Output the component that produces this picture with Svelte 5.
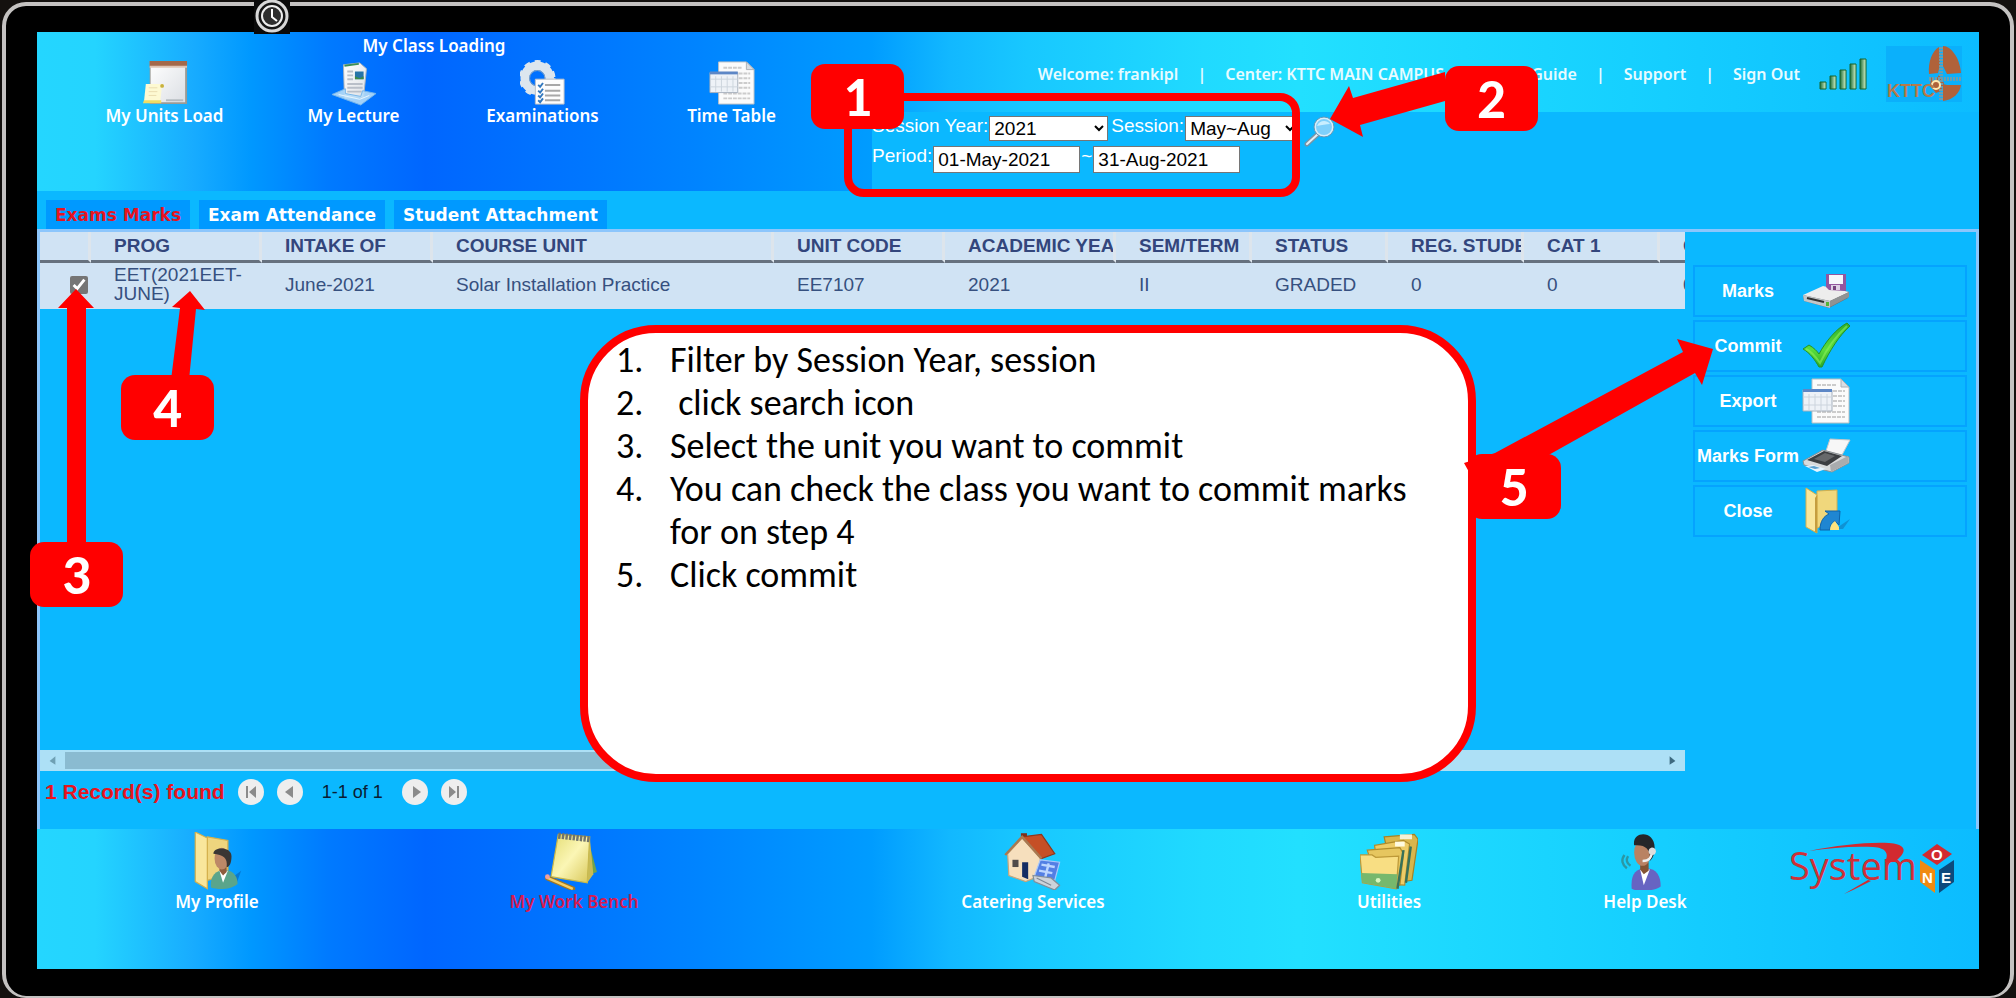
<script>
  const modules = [
    { label: 'My Units Load', icon: 'clipboard' },
    { label: 'My Lecture', icon: 'lecture' },
    { label: 'Examinations', icon: 'exams' },
    { label: 'Time Table', icon: 'sheet' }
  ];
  const tabs = ['Exams Marks', 'Exam Attendance', 'Student Attachment'];
  const columns = ['PROG', 'INTAKE OF', 'COURSE UNIT', 'UNIT CODE', 'ACADEMIC YEAR', 'SEM/TERM', 'STATUS', 'REG. STUDENTS', 'CAT 1', 'CAT 2'];
  const record = ['EET(2021EET-JUNE)', 'June-2021', 'Solar Installation Practice', 'EE7107', '2021', 'II', 'GRADED', '0', '0', '0'];
  const actions = [
    { label: 'Marks', icon: 'drive' },
    { label: 'Commit', icon: 'tick' },
    { label: 'Export', icon: 'sheet' },
    { label: 'Marks Form', icon: 'printer' },
    { label: 'Close', icon: 'folderArrow' }
  ];
  const dock = [
    { label: 'My Profile', icon: 'profile' },
    { label: 'My Work Bench', icon: 'notepad', active: true },
    { label: 'Catering Services', icon: 'house' },
    { label: 'Utilities', icon: 'folders' },
    { label: 'Help Desk', icon: 'agent' }
  ];
  let activeTab = $state('Exams Marks');
  let year = $state('2021');
  let session = $state('May~Aug');
  let from = $state('01-May-2021');
  let to = $state('31-Aug-2021');
  let checked = $state(true);
</script>

{#snippet icon(name)}
  <svg class="icon" viewBox="0 0 48 48" aria-hidden="true">
    {#if name === 'clipboard'}
      <path d="M8 1h39v45H8z" fill="#9a9a94" /><path d="M9 2h36v42H9z" fill="url(#paper)" />
      <path d="M8 1h39v6H8z" fill="#a4694a" /><path d="M8 6h39v2H8z" fill="#dec4b4" />
      <path d="M25 42h18" stroke="#b5bbc0" stroke-width="2" />
      <path d="M4 25h17l-2 19H2z" fill="#fdf9d2" /><path d="M2 42h18v3H1z" fill="#f1dd63" />
      <path d="M7 29h9M7 33h9M7 37h8" stroke="#e9ddb0" /><circle cx="21" cy="27" r="2" fill="#c8b13c" />
    {:else if name === 'lecture'}
      <path d="M13 5l17-2 7 6-3 30-20 1z" fill="url(#paper)" stroke="#a8b2bd" />
      <path d="M14 6l15-2" stroke="#3a8f57" stroke-width="2" />
      <path d="M25 12h9v8h-9z" fill="#2674a8" /><path d="M25 17l5 2 4-2v3h-9z" fill="#3c8b4a" />
      <path d="M17 12h6M17 16h6M17 20h6M17 25h16M17 29h16M17 33h15" stroke="#b9bfc8" stroke-width="2" />
      <path d="M1 36l14-6v5l16 3 2-6 14 3-16 12z" fill="#b5dcf7" fill-opacity=".9" stroke="#74b5ea" />
      <path d="M8 36l22 5 10-4" stroke="#e9f7ff" fill="none" />
    {:else if name === 'exams'}
      <circle cx="18" cy="19" r="13" fill="none" stroke="#dce6ee" stroke-width="9" />
      <circle cx="18" cy="19" r="17" fill="none" stroke="#dce6ee" stroke-width="4" stroke-dasharray="6 5" />
      <circle cx="18" cy="19" r="8" fill="none" stroke="#8fa7bd" />
      <path d="M16 20h30v26H16z" fill="#fdfdfd" stroke="#b8bec6" />
      <path d="M26 26h16M26 32h16M26 37h16M26 42h16" stroke="#a8a8a8" stroke-width="2" />
      <path d="M19 26l2 2 3-4M19 32l2 2 3-4M19 37l2 2 3-4M19 42l2 2 3-4" fill="none" stroke="#3278be" stroke-width="2" />
    {:else if name === 'sheet'}
      <path d="M10 2h29l8 8v36H10z" fill="#fbfbfb" stroke="#b9bec3" /><path d="M39 2v8h8z" fill="#d8dde2" stroke="#aab0b6" />
      <path d="M15 8h20M31 14h12M31 19h12M31 24h12M31 29h12M15 35h28M15 40h28" stroke="#ccc" stroke-width="2" stroke-dasharray="4 1" />
      <path d="M1 13h29v21H1z" fill="#eef2f7" stroke="#a6b0bc" /><path d="M1 12h29v3H1z" fill="#5d87c6" />
      <path d="M1 20h29M7 17v16M13 17v16M19 17v16M25 17v16M1 28h29" stroke="#ccd4dd" />
    {:else if name === 'drive'}
      <path d="M1 29l20-9 26 5-1 6-19 10L2 34z" fill="#6c6f72" /><path d="M1 28l20-9 26 6-19 9z" fill="#ededed" />
      <path d="M1 28l27 6v7L2 34z" fill="#c3c6c8" /><path d="M28 34l19-9v5l-19 10z" fill="#8f9294" />
      <path d="M5 31l17 4" stroke="#333" stroke-width="2" /><path d="M24 35h3v4h-3z" fill="#54b336" />
      <path d="M24 7h20v17l-17-1-3-3z" fill="#93569f" /><path d="M27 8h14v9H27z" fill="#f5f7fb" /><path d="M29 18h9v5h-9z" fill="#ddd0e4" /><path d="M31 19h3v4h-3z" fill="#74437f" />
    {:else if name === 'tick'}
      <path d="M1 27l6-4c5 3 8 6 10 9C24 19 34 7 45 1l3 3C37 14 28 28 20 45h-3C13 38 8 31 1 27z" fill="url(#green)" stroke="#259425" />
      <path d="M4 27c6 3 10 8 14 14 7-15 15-26 27-37" fill="none" stroke="#8cf05a" stroke-width="2" opacity=".6" />
    {:else if name === 'printer'}
      <path d="M28 7l20 1-8 15-16-4z" fill="#f7f7f7" stroke="#c3c6c9" />
      <path d="M1 29l20-11 26 7v6L30 40 2 33z" fill="#d9dbdc" stroke="#8d9194" /><path d="M5 28l17-9 18 5-15 10z" fill="#3c3f42" />
      <path d="M12 27l11-6 10 3-10 6z" fill="#67696b" /><path d="M28 33l18-9v7l-17 9z" fill="#a9acae" />
      <path d="M3 34l8-1 13 4-9 3z" fill="#e7f5ff" /><path d="M6 35l6-1 6 2-5 1z" fill="#5ca0cf" />
    {:else if name === 'folderArrow'}
      <path d="M15 4l20-1v30l-20 8z" fill="#f0d77c" stroke="#d5b04c" /><path d="M4 1l11 7v38L4 40z" fill="#f9e69b" stroke="#d5b04c" />
      <path d="M15 8l-2 3v34l2 1z" fill="#c59d3e" /><path d="M33 42l15-10-7 10z" fill="#1278b8" opacity=".6" />
      <path d="M18 43c0-9 4-14 9-16l-4-3h15l-1 14-4-4c-4 2-5 5-5 9z" fill="#1f86d2" stroke="#0e63a9" />
      <path d="M28 43c0-4 2-7 5-9l4 6v3z" fill="#ffe27d" />
    {:else if name === 'profile'}
      <path d="M16 4l17 3v28l-17 5z" fill="#eed57e" stroke="#d5b04c" /><path d="M6 0l10 5v42L6 41z" fill="#f9e69b" stroke="#d5b04c" />
      <path d="M32 41l12-9-4 11z" fill="#0660b5" opacity=".6" />
      <path d="M19 46c-1-10 4-14 11-15 9 1 11 7 11 12-6 5-16 5-22 3z" fill="#5aa58b" /><path d="M26 32l3 10 4-10z" fill="#fff" />
      <path d="M26 27h6v6l-3 3-3-4z" fill="#8e5c3d" /><ellipse cx="28" cy="22" rx="6" ry="9" fill="#bd8867" />
      <path d="M21 18c0-6 15-6 15 2 0 6-2 9-4 9 1-8-3-10-11-11z" fill="#3a3634" />
    {:else if name === 'notepad'}
      <path d="M35 4l8 29-8 3z" fill="#72a24c" /><path d="M11 2l26 2-2 38-30-5z" fill="url(#note)" stroke="#c9b84a" />
      <path d="M37 4l3 31-5 7z" fill="#c9bb55" /><path d="M11 3l26 3" stroke="#70746d" stroke-width="5" stroke-dasharray="2 1" />
      <path d="M2 38l21 9" stroke="#a07723" stroke-width="4" stroke-linecap="round" /><path d="M2 38l21 9" stroke="#f5cf68" stroke-width="2" /><circle cx="2" cy="37" r="2" fill="#ef9f9f" />
    {:else if name === 'house'}
      <path d="M14 1h5v9h-5z" fill="#7d2f1c" /><path d="M3 18L15 5l15 16v15l-12 5L4 36z" fill="#f6dfbd" stroke="#c7a67c" />
      <path d="M15 4l16-2 11 16-11 4z" fill="#c54f26" stroke="#8f351a" /><path d="M1 19L15 4l16 18" fill="none" stroke="#a87951" stroke-width="2" />
      <path d="M7 23h5v6H7z" fill="#504a48" /><path d="M15 25h5v14l-5-2z" fill="#142c64" />
      <path d="M30 23l16 2-4 15-17-3z" fill="#537fe4" stroke="#a9c8fa" /><path d="M31 27l11 2M29 32l11 2M37 26l-3 12" stroke="#bdd6ff" stroke-width="2" />
      <path d="M24 36l15 2 7 6-4 4-17-7z" fill="#cdd3da" stroke="#838e99" /><path d="M27 38l12 6" stroke="#7d8894" />
    {:else if name === 'folders'}
      <path d="M20 4l25-2 3 4-5 34-15 2z" fill="#d8b64c" stroke="#a78323" /><path d="M33 2h10v4H33z" fill="#f6f1d5" />
      <path d="M12 11l24-4 5 3-4 34-20-1z" fill="#edcc67" stroke="#b08c2c" /><path d="M29 8h8v4h-8z" fill="#fffbe0" />
      <path d="M6 15l27-2 3 5-3 26-18-1z" fill="#e6c65f" stroke="#b08c2c" />
      <path d="M0 19h10l3 2 19-1-2 27L2 42z" fill="#f8de83" stroke="#bd9938" /><path d="M1 34l30 1-1 12-28-5z" fill="#76b86d" />
      <circle cx="15" cy="40" r="2" fill="#d9f6c0" /><path d="M36 15l-5 32M42 12l-4 30" stroke="#37715a" stroke-width="2" />
    {:else if name === 'agent'}
      <path d="M13 47c-1-12 3-17 12-17 9 0 12 7 12 15-6 4-18 5-24 2z" fill="#6764c2" /><path d="M20 31l3 13 5-13z" fill="#fff" />
      <path d="M20 25h7v7l-4 3-3-4z" fill="#845434" /><ellipse cx="22" cy="17" rx="7" ry="11" fill="#b98263" />
      <path d="M15 11C13-1 32-2 32 13c0 6-2 9-4 11 1-9-3-14-13-13z" fill="#252629" />
      <path d="M30 13c0 9-3 11-8 11" fill="none" stroke="#eee" stroke-width="2" /><circle cx="30" cy="16" r="3" fill="#ddd" />
      <path d="M10 20c-2 3-1 6 2 8M7 19c-3 4-2 8 2 11" fill="none" stroke="#2b97a5" stroke-width="2" />
    {/if}
  </svg>
{/snippet}

{#snippet pageButton(label, path)}
  <button type="button" class="page" aria-label={label}>
    <svg viewBox="0 0 26 26" aria-hidden="true"><path d={path} /></svg>
  </button>
{/snippet}

<svg class="defs" aria-hidden="true">
  <defs>
    <linearGradient id="paper" x1="0" y1="0" x2="1" y2="1"><stop stop-color="#fff" /><stop offset="1" stop-color="#dcdfe4" /></linearGradient>
    <linearGradient id="green" x1="0" y1="0" x2="0" y2="1"><stop stop-color="#2fae2d" /><stop offset=".6" stop-color="#5ade3c" /><stop offset="1" stop-color="#2cab28" /></linearGradient>
    <linearGradient id="note" x1="0" y1="0" x2="1" y2="1"><stop stop-color="#e3dc72" /><stop offset=".5" stop-color="#fbf6b5" /><stop offset="1" stop-color="#d9c85a" /></linearGradient>
    <linearGradient id="bar" x1="0" y1="0" x2="1" y2="0"><stop stop-color="#1d6b35" /><stop offset="1" stop-color="#d9f7cf" /></linearGradient>
  </defs>
</svg>

<div class="page-frame">
  <div class="device">
    <div class="screen">
      <header>
        <nav class="modules" aria-label="Modules">
          <p class="ticker">My Class Loading</p>
          <ul>
            {#each modules as m}
              <li><a class="tile" href="#top">{@render icon(m.icon)}<span>{m.label}</span></a></li>
            {/each}
          </ul>
        </nav>
        <div class="account">
          <div class="userbar">
            <span>Welcome: frankipl</span><span>|</span>
            <span>Center: KTTC MAIN CAMPUS</span><span>|</span>
            <a href="#guide">User Guide</a><span>|</span>
            <a href="#support">Support</a><span>|</span>
            <a href="#signout">Sign Out</a>
            <svg class="signal" viewBox="0 0 48 32" aria-hidden="true">
              <g fill="url(#bar)" stroke="#14652e">
                <path d="M1 24h6v7H1z" /><path d="M11 18h6v13h-6z" /><path d="M21 12h6v19h-6z" /><path d="M31 6h6v25h-6z" /><path d="M41 1h6v30h-6z" />
              </g>
            </svg>
            <svg class="crest" viewBox="0 0 76 56" role="img" aria-label="KTTC logo">
              <path d="M0 0h76v56H0z" fill="#0bb0fb" />
              <g fill="#b0623a">
                <path d="M53 1C46 5 42 16 43 28l9-1 2-8zM57 0c8 0 17 12 18 27l-14 1-4-8zM57 38l4 1h14c-1 8-8 15-18 16z" />
                <path d="M45 31l4 4 4-6 5 8-3 8-5 2-6-7z" />
              </g>
              <path d="M55 1v54M43 33h33" stroke="#6f9dac" stroke-width="4" stroke-dasharray="2 1" />
              <circle cx="50" cy="39" r="4" fill="none" stroke="#ffe9b0" stroke-width="2" />
              <text x="1" y="51" class="crest-text">KTTC</text>
            </svg>
          </div>
          <form class="filters" onsubmit={(e) => e.preventDefault()}>
            <div class="row">
              <label for="year">Session Year:</label>
              <select id="year" bind:value={year}><option>2021</option><option>2020</option></select>
              <label for="session" class="next">Session:</label>
              <select id="session" bind:value={session}><option>May~Aug</option><option>Jan~Apr</option></select>
              <button type="submit" class="search" aria-label="Search">
                <svg viewBox="0 0 32 32" aria-hidden="true">
                  <path d="M3 28L14 18" stroke="#7994a6" stroke-width="5" stroke-linecap="round" /><path d="M3 28L14 18" stroke="#e4eef4" stroke-width="2" stroke-linecap="round" />
                  <circle cx="20" cy="11" r="9" fill="#7fd0fb" stroke="#d9eef9" stroke-width="2" /><circle cx="20" cy="11" r="10" fill="none" stroke="#6699b8" />
                  <path d="M13 10c2-5 9-7 13-2-4 0-8 1-13 2z" fill="#c9eeff" />
                </svg>
              </button>
            </div>
            <div class="row">
              <label for="from">Period:</label>
              <input id="from" type="text" bind:value={from} />
              <label for="to">~</label>
              <input id="to" type="text" bind:value={to} />
            </div>
          </form>
        </div>
      </header>

      <div class="tabs" role="tablist">
        {#each tabs as t}
          <button type="button" role="tab" aria-selected={t === activeTab} class:active={t === activeTab} onclick={() => (activeTab = t)}>{t}</button>
        {/each}
      </div>

      <main>
        <section class="records">
          <div class="grid">
            <table>
              <colgroup>
                <col class="c-check" /><col class="c-mid" /><col class="c-mid" /><col class="c-wide" /><col class="c-mid" /><col class="c-mid" />
                <col class="c-slim" /><col class="c-slim" /><col class="c-slim" /><col class="c-slim" /><col class="c-slim" />
              </colgroup>
              <thead>
                <tr><th></th>{#each columns as c}<th>{c}</th>{/each}</tr>
              </thead>
              <tbody>
                <tr>
                  <td class="pick"><input type="checkbox" aria-label="Select unit" bind:checked /></td>
                  {#each record as cell}<td>{cell}</td>{/each}
                </tr>
              </tbody>
            </table>
          </div>
          <div class="scrollbar">
            <svg viewBox="0 0 26 21" aria-hidden="true"><path d="M16 6v9l-6-4z" fill="#6fa0b4" /></svg>
            <span class="thumb"></span>
            <svg viewBox="0 0 26 21" aria-hidden="true"><path d="M10 6v9l6-4z" fill="#3d6a80" /></svg>
          </div>
          <div class="pager">
            <strong>1 Record(s) found</strong>
            {@render pageButton('First page', 'M8 7h2v12H8zM18 7v12l-7-6z')}
            {@render pageButton('Previous page', 'M16 7v12l-8-6z')}
            <span>1-1 of 1</span>
            {@render pageButton('Next page', 'M11 7v12l8-6z')}
            {@render pageButton('Last page', 'M8 7v12l7-6zM16 7h2v12h-2z')}
          </div>
        </section>
        <aside>
          {#each actions as a}
            <button type="button"><span>{a.label}</span>{@render icon(a.icon)}</button>
          {/each}
        </aside>
      </main>

      <footer>
        {#each dock as d}
          <a class="tile" class:active={d.active} href="#top">{@render icon(d.icon)}<span>{d.label}</span></a>
        {/each}
        <svg class="brand" viewBox="0 0 168 56" role="img" aria-label="System ONE">
          <text x="0" y="38" class="brand-text">System</text>
          <path d="M20 9C50 3 78 0 100 1c14 1 18 6 12 13l-6 6H96c4-8 2-14-12-15C62 4 42 6 20 9z" fill="#d22a30" />
          <path d="M55 52l24-14 3 1-18 9z" fill="#d22a30" />
          <path d="M133 13l15-11 15 10-15 11z" fill="#d22a30" /><path d="M131 18l15 10v23l-15-11z" fill="#f08a12" /><path d="M150 28l15-10v22l-15 11z" fill="#0d4a7c" />
          <g class="cube"><text x="142" y="18">O</text><text x="133" y="41">N</text><text x="152" y="41">E</text></g>
        </svg>
      </footer>
    </div>

    <svg class="knob" viewBox="0 0 36 34" aria-hidden="true">
      <path d="M0 0h36v34H0z" fill="#0a0a0a" />
      <circle cx="18" cy="16" r="15" fill="#151515" stroke="#d8d8d8" stroke-width="3" />
      <circle cx="18" cy="16" r="10" fill="#2e2e2e" stroke="#eee" stroke-width="2" />
      <path d="M18 9v8l5 4" fill="none" stroke="#fff" stroke-width="2" />
    </svg>
  </div>

  <div class="notes">
    <ol>
      <li>Filter by Session Year, session</li>
      <li>&nbsp;click search icon</li>
      <li>Select the unit you want to commit</li>
      <li>You can check the class you want to commit marks for on step 4</li>
      <li>Click commit</li>
    </ol>
  </div>
  <div class="ring"></div>
  <svg class="arrows" aria-hidden="true">
    <path d="M1330 119l19-33 4 12 92-26v29l-85 24 3 12z" />
    <path d="M76 289l18 19h-8v240H67V308h-9z" />
    <path d="M190 291l15 19-9-1-7 71h-18l9-72-8-1z" />
    <path d="M1713 349l-11 36-7-12-150 84-71 24-10-18 31-10 188-101-6-13z" />
  </svg>
  <span class="badge b1">1</span>
  <span class="badge b2">2</span>
  <span class="badge b3">3</span>
  <span class="badge b4">4</span>
  <span class="badge b5">5</span>
</div>

<style>
  :global(body) { background: #14110f; }
  .page-frame, .page-frame :global(*) { box-sizing: border-box; }
  .page-frame {
    position: relative;
    min-height: 100vh;
    display: flex;
    padding: 2px 2px 0;
    font-family: "Liberation Sans", Arial, sans-serif;
    font-size: 19px;
    overflow: hidden;
  }
  .defs { position: absolute; width: 0; height: 0; }
  .device {
    position: relative;
    flex: 1;
    min-width: 0;
    display: flex;
    padding: 26px 31px 27px;
    background: #000;
    border: 4px solid #c4c2c1;
    border-bottom-width: 2px;
    border-radius: 24px;
  }
  .screen { flex: 1; min-width: 0; display: flex; flex-direction: column; background: #0bb8ff; }
  header, footer {
    background: linear-gradient(90deg, #24d6ff 0, #24d4ff 3%, #18acff 8%, #0098ff 11%, #007aff 15%, #0066ff 20%, #0076ff 28%, #0084ff 34%, #009cff 43%, #12b8ff 47%, #18c8ff 51%, #20daff 60%, #22e0ff 65%, #16d0ff 82%, #0cbcff 100%);
  }
  a { color: inherit; text-decoration: none; }
  button { font: inherit; color: inherit; background: none; border: 0; padding: 0; cursor: pointer; }
  .icon { display: block; width: 46px; height: 46px; }

  header { display: flex; height: 159px; color: #fff; }
  .modules { flex: 0 0 43%; min-width: 0; padding: 4px 46px 0 33px; font: 600 17px/20px "Noto Sans", sans-serif; }
  .ticker { margin: 0 0 4px; padding-right: 28px; text-align: center; }
  .modules ul { display: grid; grid-template-columns: repeat(4, 1fr); margin: 0; padding: 0; list-style: none; }
  .tile { display: flex; flex-direction: column; align-items: center; }
  .account { flex: 1; min-width: 0; display: flex; flex-direction: column; }
  .userbar {
    display: flex; align-items: center; justify-content: flex-end; gap: 19px;
    height: 80px; padding: 4px 17px 0 0;
    font: 600 16px/20px "Noto Sans", sans-serif; white-space: nowrap; color: #e8fbff;
  }
  .signal { width: 48px; height: 36px; }
  .crest { width: 76px; height: 56px; }
  .crest-text { font: 700 18px "Liberation Sans", sans-serif; fill: #b87a4a; }
  .filters { flex: 1; padding-top: 4px; background: #0bb8ff; color: #fff; }
  .row { display: flex; align-items: flex-start; gap: 1px; height: 30px; line-height: 19px; }
  .next { margin-left: 2px; }
  .row select, .row input {
    height: 25px; border: 1px solid #767676; border-radius: 0; background: #fff; color: #000;
    font: 19px "Liberation Sans", Arial, sans-serif;
  }
  #year { width: 119px; }
  #session { width: 114px; }
  .row input { width: 147px; height: 27px; padding: 0 4px; }
  .search svg { display: block; width: 32px; height: 32px; margin-left: 4px; }

  .tabs { display: flex; gap: 9px; padding: 9px 9px 0; }
  .tabs button { height: 29px; padding: 0 9px; background: #0099ff; color: #fff; font: 700 17px/28px "DejaVu Sans", Verdana, sans-serif; white-space: nowrap; }
  .tabs .active { color: #e6141e; }

  main { flex: 1; display: flex; border: 3px solid #8cc6fc; border-bottom: 0; min-height: 0; }
  .records { flex: 1; min-width: 0; display: flex; flex-direction: column; }
  .grid { flex: 1; overflow: hidden; }
  table { table-layout: fixed; width: 1756px; border-spacing: 0; background: #d0e3f4; color: #36507f; }
  .c-check { width: 51px; }
  .c-mid { width: 171px; }
  .c-wide { width: 341px; }
  .c-slim { width: 136px; }
  th {
    height: 31px; padding: 0 0 0 23px; border-right: 3px solid #dde5ec; border-bottom: 3px solid #66717e;
    text-align: left; font-size: 19px; line-height: 24px; white-space: nowrap; overflow: hidden; color: #33467c;
  }
  td { height: 46px; padding: 0 16px 4px 23px; line-height: 19px; }
  .pick { padding: 0 3px 4px 0; text-align: right; }
  .pick input { width: 18px; height: 18px; margin: 0; vertical-align: middle; accent-color: #757575; }
  .scrollbar { display: flex; height: 21px; background: #ade0f6; }
  .scrollbar svg { width: 25px; height: 21px; }
  .thumb { flex: 0 1 70%; margin: 2px auto 2px 0; background: #8abbd1; }
  .pager { display: flex; align-items: center; gap: 13px; height: 58px; padding: 0 0 16px 5px; color: #0a1c33; font-size: 18px; }
  .pager strong { color: #e6141e; font-size: 21px; }
  .pager span { padding: 0 6px; }
  .page { width: 26px; height: 26px; border-radius: 50%; background: #eeeeee; }
  .page svg { display: block; fill: #8b8b8b; }

  aside { display: flex; flex-direction: column; gap: 3px; width: 291px; padding: 33px 9px 0 8px; color: #fff; font-weight: 700; font-size: 18px; }
  aside button { display: flex; align-items: center; height: 52px; border: 2px solid #05a3ff; white-space: nowrap; }
  aside span { width: 106px; text-align: center; }
  aside .icon { width: 50px; height: 48px; }

  footer {
    display: grid;
    grid-template-columns: minmax(0, 360fr) minmax(0, 354fr) minmax(0, 564fr) minmax(0, 148fr) minmax(0, 364fr) minmax(0, 152fr);
    height: 140px; padding-top: 3px; color: #fff; font: 600 17px/24px "Noto Sans", sans-serif; white-space: nowrap;
  }
  footer .icon { width: 58px; height: 58px; }
  footer .active { color: #d81b50; }
  .brand { width: 168px; height: 56px; justify-self: end; margin: 10px 22px 0 0; }
  .brand-text { font: 400 38px "Comic Sans MS", "Open Sans", sans-serif; fill: #cf3038; }
  .cube text { font: 700 15px "Liberation Sans", sans-serif; fill: #fff; }

  .knob { position: absolute; left: 248px; top: -6px; width: 36px; height: 34px; }
  .notes {
    position: absolute; left: 580px; top: 325px; width: 896px; height: 457px; padding: 6px 40px 0 82px;
    background: #fff; border: 8px solid #f00; border-radius: 76px;
    font: 400 36px/43px Carlito, Calibri, Lato, sans-serif; color: #000;
  }
  .notes ol { margin: 0; padding: 0; }
  .notes li { list-style: none; counter-increment: step; position: relative; }
  .notes li::before { content: counter(step) "."; position: absolute; left: -54px; }
  .ring { position: absolute; left: 844px; top: 93px; width: 456px; height: 104px; border: 8px solid #f00; border-radius: 20px; pointer-events: none; }
  .arrows { position: absolute; left: 0; top: 0; width: 100%; height: 100%; fill: #f00; pointer-events: none; }
  .badge {
    position: absolute; width: 93px; height: 65px; border-radius: 14px; background: #f00; color: #fff;
    font: 700 57px/66px Carlito, Calibri, Lato, sans-serif; text-align: center;
  }
  .b1 { left: 811px; top: 64px; }
  .b2 { left: 1445px; top: 66px; }
  .b3 { left: 30px; top: 542px; }
  .b4 { left: 121px; top: 375px; }
  .b5 { left: 1468px; top: 454px; }
</style>
